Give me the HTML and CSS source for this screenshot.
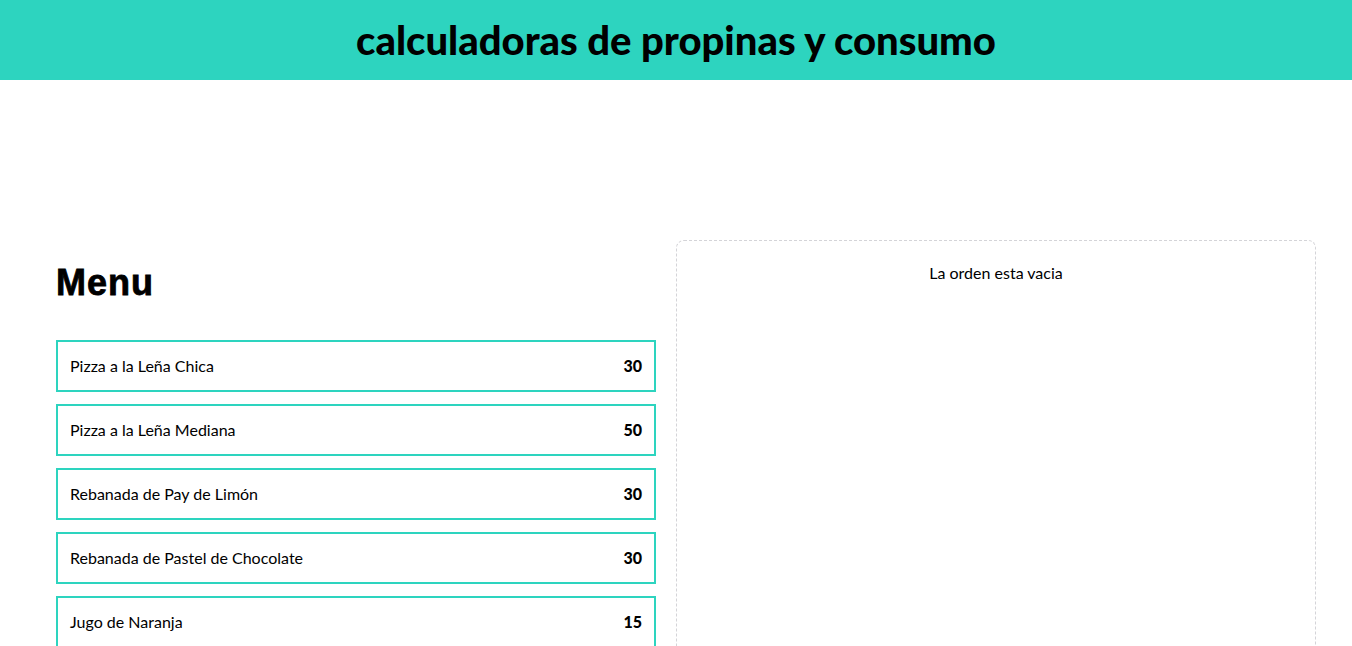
FILE: index.html
```html
<!DOCTYPE html>
<html lang="es">
<head>
<meta charset="UTF-8">
<title>Calculadora de propinas</title>
<link rel="stylesheet" href="styles.css">
</head>
<body>
<header class="header">
  <h1 class="title">calculadoras de propinas y consumo</h1>
</header>
<main class="main">
  <section class="menu">
    <h2 class="menu-title">Menu</h2>
    <div class="items">
      <button class="item"><span>Pizza a la Leña Chica</span><span class="price">30</span></button>
      <button class="item"><span>Pizza a la Leña Mediana</span><span class="price">50</span></button>
      <button class="item"><span>Rebanada de Pay de Limón</span><span class="price">30</span></button>
      <button class="item"><span>Rebanada de Pastel de Chocolate</span><span class="price">30</span></button>
      <button class="item"><span>Jugo de Naranja</span><span class="price">15</span></button>
      <button class="item"><span>Café Americano</span><span class="price">20</span></button>
    </div>
  </section>
  <section class="order">
    <p class="empty">La orden esta vacia</p>
  </section>
</main>
</body>
</html>
```
FILE: styles.css
```css
* { box-sizing: border-box; }
html, body { margin: 0; padding: 0; }
body {
  font-family: Lato, "Liberation Sans", sans-serif;
  color: #000;
  background: #fff;
}
.header {
  background: #2dd4bf;
  padding: 20px 0;
}
.title {
  margin: 0;
  text-align: center;
  font-size: 40px;
  line-height: 40px;
  font-weight: 900;
}
.main {
  max-width: 1280px;
  margin: 0 auto;
  padding-top: 160px;
  display: grid;
  grid-template-columns: 1fr 1fr;
}
.menu { padding: 20px; }
.menu-title {
  margin: 0;
  padding-top: 3px;
  height: 40px;
  font-family: "Liberation Sans", Arial, sans-serif;
  font-size: 36px;
  line-height: 40px;
  font-weight: 700;
  letter-spacing: 1px;
  -webkit-text-stroke: 0.8px #000;
}
.items {
  margin-top: 40px;
  display: flex;
  flex-direction: column;
  gap: 12px;
}
.item {
  display: flex;
  justify-content: space-between;
  width: 100%;
  border: 2px solid #2dd4bf;
  background: #fff;
  padding: 12px;
  font-family: inherit;
  font-size: 16px;
  line-height: 24px;
  color: #000;
  text-align: left;
  cursor: pointer;
}
.price { font-weight: 900; }
.order {
  border: 1px dashed #d4d4d8;
  border-radius: 8px;
  padding: 20px;
  min-height: 600px;
}
.empty {
  margin: 0;
  text-align: center;
  font-size: 16px;
  line-height: 24px;
}
```
